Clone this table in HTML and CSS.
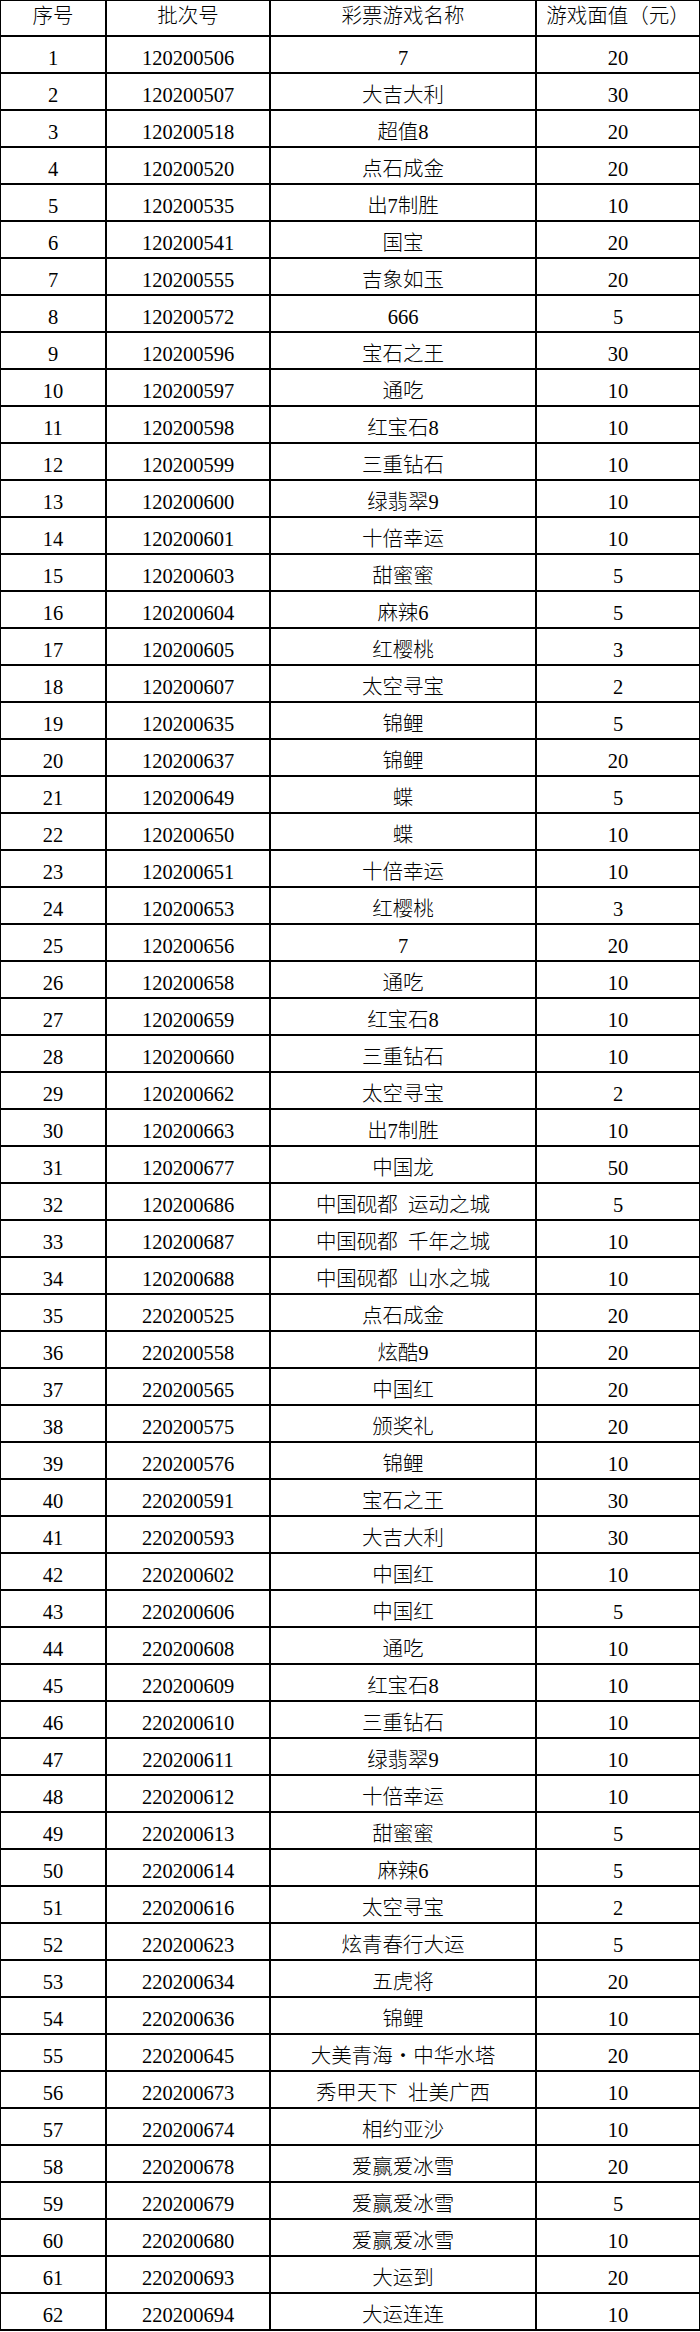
FILE: index.html
```html
<!DOCTYPE html>
<html lang="zh-CN">
<head>
<meta charset="utf-8">
<title>彩票游戏列表</title>
<link rel="stylesheet" href="styles.css">
</head>
<body>
<table class="games">
<colgroup><col class="c-no"><col class="c-batch"><col class="c-name"><col class="c-price"></colgroup>
<thead>
<tr class="head"><th>序号</th><th>批次号</th><th>彩票游戏名称</th><th>游戏面值（元）</th></tr>
</thead>
<tbody>
<tr><td>1</td><td>120200506</td><td>7</td><td>20</td></tr>
<tr><td>2</td><td>120200507</td><td>大吉大利</td><td>30</td></tr>
<tr><td>3</td><td>120200518</td><td>超值8</td><td>20</td></tr>
<tr><td>4</td><td>120200520</td><td>点石成金</td><td>20</td></tr>
<tr><td>5</td><td>120200535</td><td>出7制胜</td><td>10</td></tr>
<tr><td>6</td><td>120200541</td><td>国宝</td><td>20</td></tr>
<tr><td>7</td><td>120200555</td><td>吉象如玉</td><td>20</td></tr>
<tr><td>8</td><td>120200572</td><td>666</td><td>5</td></tr>
<tr><td>9</td><td>120200596</td><td>宝石之王</td><td>30</td></tr>
<tr><td>10</td><td>120200597</td><td>通吃</td><td>10</td></tr>
<tr><td>11</td><td>120200598</td><td>红宝石8</td><td>10</td></tr>
<tr><td>12</td><td>120200599</td><td>三重钻石</td><td>10</td></tr>
<tr><td>13</td><td>120200600</td><td>绿翡翠9</td><td>10</td></tr>
<tr><td>14</td><td>120200601</td><td>十倍幸运</td><td>10</td></tr>
<tr><td>15</td><td>120200603</td><td>甜蜜蜜</td><td>5</td></tr>
<tr><td>16</td><td>120200604</td><td>麻辣6</td><td>5</td></tr>
<tr><td>17</td><td>120200605</td><td>红樱桃</td><td>3</td></tr>
<tr><td>18</td><td>120200607</td><td>太空寻宝</td><td>2</td></tr>
<tr><td>19</td><td>120200635</td><td>锦鲤</td><td>5</td></tr>
<tr><td>20</td><td>120200637</td><td>锦鲤</td><td>20</td></tr>
<tr><td>21</td><td>120200649</td><td>蝶</td><td>5</td></tr>
<tr><td>22</td><td>120200650</td><td>蝶</td><td>10</td></tr>
<tr><td>23</td><td>120200651</td><td>十倍幸运</td><td>10</td></tr>
<tr><td>24</td><td>120200653</td><td>红樱桃</td><td>3</td></tr>
<tr><td>25</td><td>120200656</td><td>7</td><td>20</td></tr>
<tr><td>26</td><td>120200658</td><td>通吃</td><td>10</td></tr>
<tr><td>27</td><td>120200659</td><td>红宝石8</td><td>10</td></tr>
<tr><td>28</td><td>120200660</td><td>三重钻石</td><td>10</td></tr>
<tr><td>29</td><td>120200662</td><td>太空寻宝</td><td>2</td></tr>
<tr><td>30</td><td>120200663</td><td>出7制胜</td><td>10</td></tr>
<tr><td>31</td><td>120200677</td><td>中国龙</td><td>50</td></tr>
<tr><td>32</td><td>120200686</td><td>中国砚都&ensp;运动之城</td><td>5</td></tr>
<tr><td>33</td><td>120200687</td><td>中国砚都&ensp;千年之城</td><td>10</td></tr>
<tr><td>34</td><td>120200688</td><td>中国砚都&ensp;山水之城</td><td>10</td></tr>
<tr><td>35</td><td>220200525</td><td>点石成金</td><td>20</td></tr>
<tr><td>36</td><td>220200558</td><td>炫酷9</td><td>20</td></tr>
<tr><td>37</td><td>220200565</td><td>中国红</td><td>20</td></tr>
<tr><td>38</td><td>220200575</td><td>颁奖礼</td><td>20</td></tr>
<tr><td>39</td><td>220200576</td><td>锦鲤</td><td>10</td></tr>
<tr><td>40</td><td>220200591</td><td>宝石之王</td><td>30</td></tr>
<tr><td>41</td><td>220200593</td><td>大吉大利</td><td>30</td></tr>
<tr><td>42</td><td>220200602</td><td>中国红</td><td>10</td></tr>
<tr><td>43</td><td>220200606</td><td>中国红</td><td>5</td></tr>
<tr><td>44</td><td>220200608</td><td>通吃</td><td>10</td></tr>
<tr><td>45</td><td>220200609</td><td>红宝石8</td><td>10</td></tr>
<tr><td>46</td><td>220200610</td><td>三重钻石</td><td>10</td></tr>
<tr><td>47</td><td>220200611</td><td>绿翡翠9</td><td>10</td></tr>
<tr><td>48</td><td>220200612</td><td>十倍幸运</td><td>10</td></tr>
<tr><td>49</td><td>220200613</td><td>甜蜜蜜</td><td>5</td></tr>
<tr><td>50</td><td>220200614</td><td>麻辣6</td><td>5</td></tr>
<tr><td>51</td><td>220200616</td><td>太空寻宝</td><td>2</td></tr>
<tr><td>52</td><td>220200623</td><td>炫青春行大运</td><td>5</td></tr>
<tr><td>53</td><td>220200634</td><td>五虎将</td><td>20</td></tr>
<tr><td>54</td><td>220200636</td><td>锦鲤</td><td>10</td></tr>
<tr><td>55</td><td>220200645</td><td>大美青海・中华水塔</td><td>20</td></tr>
<tr><td>56</td><td>220200673</td><td>秀甲天下&ensp;壮美广西</td><td>10</td></tr>
<tr><td>57</td><td>220200674</td><td>相约亚沙</td><td>10</td></tr>
<tr><td>58</td><td>220200678</td><td>爱赢爱冰雪</td><td>20</td></tr>
<tr><td>59</td><td>220200679</td><td>爱赢爱冰雪</td><td>5</td></tr>
<tr><td>60</td><td>220200680</td><td>爱赢爱冰雪</td><td>10</td></tr>
<tr><td>61</td><td>220200693</td><td>大运到</td><td>20</td></tr>
<tr><td>62</td><td>220200694</td><td>大运连连</td><td>10</td></tr>
</tbody>
</table>
</body>
</html>
```

FILE: styles.css
```css
html, body {
  margin: 0;
  padding: 0;
  background: #fff;
}

body {
  overflow: hidden;
}

.games {
  border-collapse: collapse;
  table-layout: fixed;
  width: 700px;
  margin: -1px 0 0 -1px;
  font-family: "Liberation Serif", "Noto Sans CJK SC", serif;
  font-size: 20.5px;
  font-weight: 300;
  color: #000;
}

.c-no { width: 106px; }
.c-batch { width: 164px; }
.c-name { width: 266px; }
.c-price { width: 164px; }

.games th,
.games td {
  border: 2px solid #000;
  height: 37px;
  padding: 0 0 3px 0;
  box-sizing: border-box;
  text-align: center;
  vertical-align: bottom;
  line-height: 22px;
  font-weight: 300;
  white-space: nowrap;
  overflow: hidden;
}

.games .head th {
  height: 36px;
  padding-bottom: 8px;
}
```
